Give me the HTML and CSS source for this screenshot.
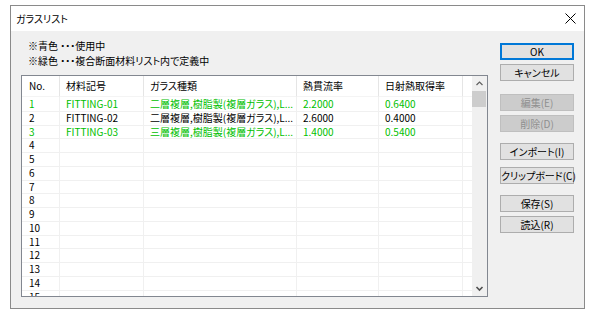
FILE: index.html
```html
<!DOCTYPE html>
<html lang="ja">

<head>
    <meta charset="UTF-8">
    <meta name="viewport" content="width=device-width, initial-scale=1.0">
    <title>ガラスリスト</title>
    <link rel="stylesheet" href="styles.css">
</head>

<body>
    <div class="window">
        <div class="titlebar">
            <span class="title">ガラスリスト</span>
            <svg class="close" width="11" height="11" viewBox="0 0 11 11">
                <path d="M0.5 0.5 L10.5 10.5 M10.5 0.5 L0.5 10.5" stroke="#000" stroke-width="1" fill="none" />
            </svg>
        </div>

        <div class="dialog">
            <div class="main">
                <div class="legend">
                    <p>※青色 ・・・使用中</p>
                    <p>※緑色 ・・・複合断面材料リスト内で定義中</p>
                </div>

                <div class="list">
                    <div class="table">
                        <div class="row head">
                            <span>No.</span>
                            <span>材料記号</span>
                            <span>ガラス種類</span>
                            <span>熱貫流率</span>
                            <span>日射熱取得率</span>
                            <span></span>
                        </div>
                        <div class="rows">
                            <div class="row green">
                                <span>1</span><span>FITTING-01</span><span>二層複層,樹脂製(複層ガラス),L...</span><span>2.2000</span><span>0.6400</span><span></span>
                            </div>
                            <div class="row">
                                <span>2</span><span>FITTING-02</span><span>二層複層,樹脂製(複層ガラス),L...</span><span>2.6000</span><span>0.4000</span><span></span>
                            </div>
                            <div class="row green">
                                <span>3</span><span>FITTING-03</span><span>三層複層,樹脂製(複層ガラス),L...</span><span>1.4000</span><span>0.5400</span><span></span>
                            </div>
                            <div class="row"><span>4</span><span></span><span></span><span></span><span></span><span></span></div>
                            <div class="row"><span>5</span><span></span><span></span><span></span><span></span><span></span></div>
                            <div class="row"><span>6</span><span></span><span></span><span></span><span></span><span></span></div>
                            <div class="row"><span>7</span><span></span><span></span><span></span><span></span><span></span></div>
                            <div class="row"><span>8</span><span></span><span></span><span></span><span></span><span></span></div>
                            <div class="row"><span>9</span><span></span><span></span><span></span><span></span><span></span></div>
                            <div class="row"><span>10</span><span></span><span></span><span></span><span></span><span></span></div>
                            <div class="row"><span>11</span><span></span><span></span><span></span><span></span><span></span></div>
                            <div class="row"><span>12</span><span></span><span></span><span></span><span></span><span></span></div>
                            <div class="row"><span>13</span><span></span><span></span><span></span><span></span><span></span></div>
                            <div class="row"><span>14</span><span></span><span></span><span></span><span></span><span></span></div>
                            <div class="row"><span>15</span><span></span><span></span><span></span><span></span><span></span></div>
                        </div>
                    </div>

                    <div class="scrollbar">
                        <svg class="arrow" width="15" height="15" viewBox="0 0 15 15">
                            <path d="M4.5 9 L7.5 6 L10.5 9" stroke="#606060" stroke-width="1.2" fill="none" />
                        </svg>
                        <div class="thumb"></div>
                        <svg class="arrow down" width="15" height="15" viewBox="0 0 15 15">
                            <path d="M4.5 6 L7.5 9 L10.5 6" stroke="#505050" stroke-width="1.6" fill="none" />
                        </svg>
                    </div>
                </div>
            </div>

            <div class="buttons">
                <button class="btn default">OK</button>
                <button class="btn">キャンセル</button>
                <button class="btn gap-l" disabled>編集(E)</button>
                <button class="btn" disabled>削除(D)</button>
                <button class="btn gap-m">インポート(I)</button>
                <button class="btn gap-s">クリップボード(C)</button>
                <button class="btn gap-m">保存(S)</button>
                <button class="btn">読込(R)</button>
            </div>
        </div>
    </div>
</body>

</html>
```

FILE: styles.css
```css
body {
    margin: 0;
    background: #ffffff;
    font-family: "Noto Sans CJK JP", "Liberation Sans", sans-serif;
    font-size: 10px;
    font-feature-settings: "palt";
    color: #000000;
}

.window {
    box-sizing: border-box;
    width: 575px;
    height: 304px;
    margin: 5px 0 0 10px;
    border: 1px solid #8a8a8a;
    display: flex;
    flex-direction: column;
}

.titlebar {
    flex-shrink: 0;
    height: 25px;
    background: #ffffff;
    display: flex;
    align-items: center;
    justify-content: space-between;
    padding: 0 8px 0 5px;
}

.dialog {
    flex: 1;
    min-height: 0;
    background: #f0f0f0;
    display: flex;
    gap: 12px;
    padding: 0 10px 11px 10px;
}

.main {
    display: flex;
    flex-direction: column;
    min-height: 0;
}

.legend {
    flex-shrink: 0;
    padding: 8px 0 7px 7px;
}

.legend p {
    margin: 0;
    line-height: 14.5px;
}

/* リスト */
.list {
    box-sizing: border-box;
    width: 467px;
    flex: 1;
    min-height: 0;
    border: 1px solid #828790;
    background: #ffffff;
    display: flex;
    overflow: hidden;
}

.table {
    display: flex;
    flex-direction: column;
    min-height: 0;
}

.row {
    display: grid;
    grid-template-columns: 38px 84px 153px 82px 84px 9px;
    height: 13.75px;
    line-height: 13.75px;
    white-space: nowrap;
}

.row span {
    box-sizing: border-box;
    border-right: 1px solid #f0f0f0;
    border-bottom: 1px solid #f0f0f0;
    padding-left: 6px;
}

.row span:first-child {
    padding-left: 7px;
}

.row span:last-child {
    border-right: none;
}

.row.head {
    flex-shrink: 0;
    height: 21px;
    line-height: 20px;
}

.row.head span {
    border-right-color: #e5e5e5;
    border-bottom-color: #f4f4f4;
}

.rows {
    flex: 1;
    min-height: 0;
    overflow: hidden;
}

.green {
    color: #00c000;
}

.scrollbar {
    width: 15px;
    background: #f0f0f0;
    display: flex;
    flex-direction: column;
}

.arrow {
    display: block;
    flex-shrink: 0;
}

.thumb {
    height: 16px;
    flex-shrink: 0;
    background: #cdcdcd;
    margin-right: 1px;
}

.arrow.down {
    margin-top: auto;
}

/* ボタン */
.buttons {
    display: flex;
    flex-direction: column;
    padding-top: 12px;
}

.btn {
    box-sizing: border-box;
    width: 74px;
    height: 17px;
    margin-top: 4px;
    padding: 0;
    font: inherit;
    font-feature-settings: "palt";
    line-height: 15px;
    white-space: nowrap;
    background: #e1e1e1;
    border: 1px solid #adadad;
    color: #000000;
}

.btn.default {
    margin-top: 0;
    border-color: #0078d7;
    box-shadow: inset 0 0 0 1px #0078d7;
}

.btn:disabled {
    background: #cccccc;
    border-color: #bfbfbf;
    color: #8f8f8f;
}

.gap-s {
    margin-top: 7px;
}

.gap-m {
    margin-top: 11px;
}

.gap-l {
    margin-top: 13px;
}
```
